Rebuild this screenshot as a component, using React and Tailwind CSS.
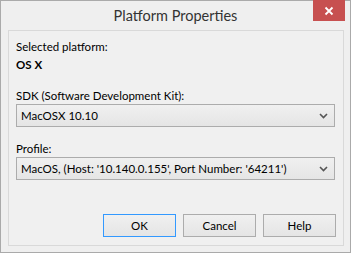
import React from "react";

const font = { fontFamily: 'Lato, "Open Sans", sans-serif' };

function Chevron() {
  return (
    <svg width="9" height="6" viewBox="0 0 9 6" className="text-[#555]">
      <path d="M1 1 L4.5 4.5 L8 1" fill="none" stroke="currentColor" strokeWidth="1.6" />
    </svg>
  );
}

function Combo({ value }) {
  return (
    <div className="h-[23px] w-[319px] border border-[#acacac] bg-gradient-to-b from-[#f0f0f0] to-[#e5e5e5] flex items-center justify-between pl-[4px] pr-[6px]">
      <span className="text-[11.5px] text-black leading-none">{value}</span>
      <Chevron />
    </div>
  );
}

function Button({ children, primary }) {
  return (
    <div
      className={`w-[73px] h-[23px] flex items-center justify-center text-[11.5px] text-black bg-gradient-to-b from-[#f0f0f0] to-[#e5e5e5] border ${
        primary ? "border-[#3399ff]" : "border-[#acacac]"
      }`}
    >
      {children}
    </div>
  );
}

export default function App() {
  return (
    <div style={font} className="w-[351px] h-[253px] border border-[#aaaaaa] bg-[#efefef] flex flex-col">
      {/* Title bar */}
      <div className="relative h-[29px] flex items-center justify-center">
        <span className="text-[14.5px] text-[#333]">Platform Properties</span>
        <div className="absolute top-[-1px] right-[5px] w-[32px] h-[21px] bg-[#c75050] flex items-center justify-center">
          <svg width="10" height="10" viewBox="0 0 10 10">
            <path d="M1.5 1.5 L8.5 8.5 M8.5 1.5 L1.5 8.5" stroke="white" strokeWidth="1.8" />
          </svg>
        </div>
      </div>

      {/* Client area */}
      <div className="flex-1 ml-[7px] mr-[6px] mb-[6px] border border-[#d9d9d9] bg-[#f0f0f0] pl-[7px] pt-[8px] flex flex-col text-[11.5px]">
        <div className="leading-[16px] text-black">Selected platform:</div>
        <div className="leading-[16px] text-black font-bold mt-[2px]">OS X</div>
        <div className="leading-[16px] text-black mt-[15px]">SDK (Software Development Kit):</div>
        <Combo value="MacOSX 10.10" />
        <div className="leading-[16px] text-black mt-[14px]">Profile:</div>
        <Combo value="MacOS, (Host: '10.140.0.155', Port Number: '64211')" />
        <div className="flex justify-end gap-[7px] mt-[34px] pr-[7px]">
          <Button primary>OK</Button>
          <Button>Cancel</Button>
          <Button>Help</Button>
        </div>
      </div>
    </div>
  );
}
